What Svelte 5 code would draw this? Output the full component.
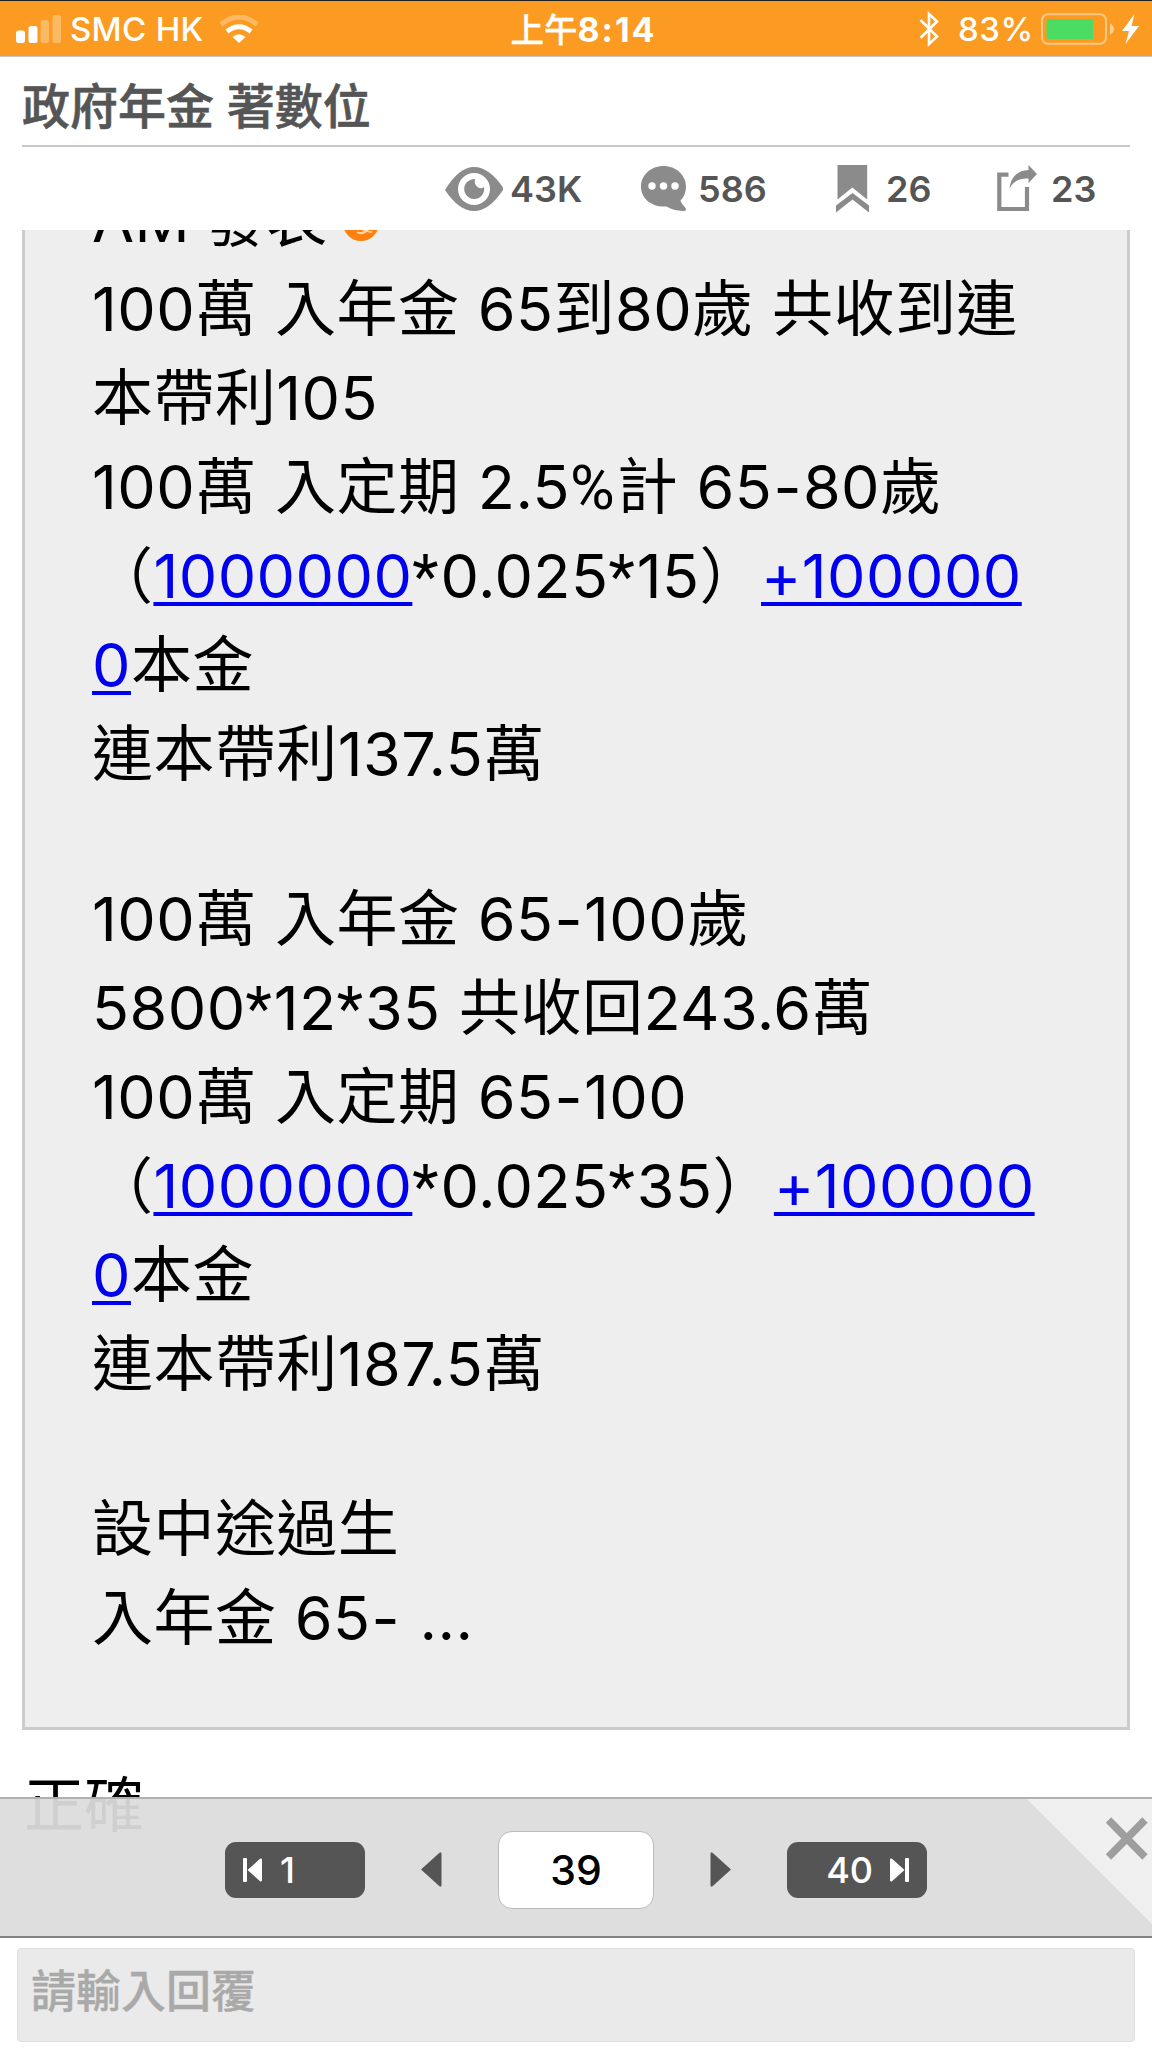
<script>
    const firstPage = 1;
    const lastPage = 40;
    let page = 39;
    let reply = "";
    let showPager = true;

    // each line is a list of parts, link parts are drawn as phone number links
    const lines = [
        [{ text: "100萬 入年金 65到80歲 共收到連" }],
        [{ text: "本帶利105" }],
        [{ text: "100萬 入定期 2.5%計 65-80歲" }],
        [{ text: "（" }, { text: "1000000", link: true }, { text: "*0.025*15）" }, { text: "+100000", link: true }],
        [{ text: "0", link: true }, { text: "本金" }],
        [{ text: "連本帶利137.5萬" }],
        [],
        [{ text: "100萬 入年金 65-100歲" }],
        [{ text: "5800*12*35 共收回243.6萬" }],
        [{ text: "100萬 入定期 65-100" }],
        [{ text: "（" }, { text: "1000000", link: true }, { text: "*0.025*35）" }, { text: "+100000", link: true }],
        [{ text: "0", link: true }, { text: "本金" }],
        [{ text: "連本帶利187.5萬" }],
        [],
        [{ text: "設中途過生" }],
        [{ text: "入年金 65- ..." }]
    ];

    // symbols get their own span, the narrower ones come from another font
    function pieces(text) {
        return text.split(/([*%-])/).filter((piece) => piece !== "");
    }

    function goTo(n) {
        page = Math.min(lastPage, Math.max(firstPage, n));
    }
</script>

<div class="screen">
    <div class="status-bar">
        <div class="status-left">
            <svg width="46" height="28" viewBox="0 0 46 28" fill="#fff">
                <rect x="0" y="15.5" width="9" height="12.5" rx="2.5" />
                <rect x="12.5" y="11" width="9" height="17" rx="2.5" />
                <rect x="24.5" y="5" width="8.5" height="23" rx="2.5" opacity=".3" />
                <rect x="36.5" y="0" width="8.5" height="28" rx="2.5" opacity=".3" />
            </svg>
            <span class="carrier">SMC HK</span>
            <svg width="40" height="28" viewBox="0 0 40 28" fill="none">
                <path d="M2 9.5Q20-5.5 38 9.5" stroke="#fff" stroke-width="5" opacity=".3" />
                <path d="M8 16.500Q20 7 32 16.500" stroke="#fff" stroke-width="5" />
                <path d="M13.500 22Q20 16.500 26.500 22L20 28Z" fill="#fff" />
            </svg>
        </div>
        <div class="clock">上午<b>8:14</b></div>
        <div class="status-right">
            <svg width="20" height="36" viewBox="0 0 20 36" fill="none" stroke="#fff" stroke-width="2.600">
                <path d="M1.500 9L18 25.500 10 33V3L18 10.500 1.500 27" />
            </svg>
            <span class="percent">83%</span>
            <svg width="74" height="32" viewBox="0 0 74 32">
                <rect x="1" y="1.200" width="64" height="29.600" rx="6" fill="none" stroke="#fff" stroke-width="2" opacity=".45" />
                <path d="M8 6H52V26H8Q5.500 26 5.500 23V9Q5.500 6 8 6Z" fill="#4cdc64" />
                <path d="M69 10.500Q73 12.500 73 16T69 21.500Z" fill="#fff" opacity=".5" />
            </svg>
            <svg class="bolt" width="17" height="30" viewBox="0 0 17 30" fill="#fff">
                <path d="M12.500 0L0 17H7L3.500 30 17 12H9.500Z" />
            </svg>
        </div>
    </div>

    <header>
        <h1>政府年金 著數位</h1>
        <div class="stats">
            <svg width="58" height="44" viewBox="0 0 58 44">
                <path d="M0 23Q14 0 29 0T58 20.500V23Q44 44 29 44T0 23Z" fill="#8b8b8b" />
                <circle cx="29" cy="22" r="16" fill="#fff" />
                <path d="M30 12A10 10 0 1 0 39 20Q36 22.500 32.500 20T30 12Z" fill="#8b8b8b" />
            </svg>
            <span class="views">43K</span>
            <svg width="46" height="46" viewBox="0 0 46 46">
                <path d="M22.500 0C35 0 45 9 45 20.500 45 26.500 43 31 39.500 34.500 40 38 45 41 45 43.500Q44.500 45.500 42 45 32 44.500 25.500 40.500C10 41.500 0 32 0 20.500S10 0 22.500 0Z" fill="#8b8b8b" />
                <g fill="#fff">
                    <circle cx="11" cy="20" r="3.700" />
                    <circle cx="22.500" cy="20" r="3.700" />
                    <circle cx="34" cy="20" r="3.700" />
                </g>
            </svg>
            <span class="comments">586</span>
            <svg width="33" height="48" viewBox="0 0 33 48" fill="#8b8b8b">
                <path d="M1.500 0H31.200V34.500L16.300 22.500 1.500 34.500Z" />
                <path d="M0 40.500L16.500 28 33 40.500V47.500L16.500 34.500 0 47.500Z" />
            </svg>
            <span class="saves">26</span>
            <svg width="40" height="47" viewBox="0 0 40 47">
                <path d="M11.500 9.700H2.300V44H30V22" fill="none" stroke="#8b8b8b" stroke-width="4.200" />
                <path d="M12.500 23.500C14 12 20 5.500 31.500 5V0L40 9 31.500 18V13.500C22 13 17 16 12.500 23.500Z" fill="#8b8b8b" />
            </svg>
            <span class="shares">23</span>
        </div>
    </header>

    <main>
        <blockquote>
            <div class="line author">
                AM 發表
                <svg class="emoji" width="36" height="40" viewBox="0 0 36 40">
                    <circle cx="18" cy="21" r="18" fill="#ff7f0f" />
                    <path d="M14 30Q21 34 28 24M20 28L29 30" fill="none" stroke="#ffd9a8" stroke-width="2" />
                </svg>
            </div>
            {#each lines as line}
                <div class="line" class:blank={line.length === 0}>
                    {#each line as part}{#if part.link}<a href="#{part.text}">{part.text}</a>{:else}{#each pieces(part.text) as piece}<span class:symbol={piece === "*" || piece === "%"} class:dash={piece === "-"}>{piece}</span>{/each}{/if}{/each}
                </div>
            {/each}
        </blockquote>
        <p class="answer">正確</p>

        {#if showPager}
            <nav>
                <button class="jump first" on:click={() => goTo(firstPage)}>
                    <svg width="20" height="24" viewBox="0 0 20 24" fill="#fff">
                        <rect x="0" y="0" width="4" height="24" rx="1" />
                        <path d="M4.500 12L17 .8Q19 0 19 2V22Q19 24 17 23.200Z" />
                    </svg>
                    {firstPage}
                </button>
                <button class="step" aria-label="previous" on:click={() => goTo(page - 1)}>
                    <svg width="21" height="35" viewBox="0 0 21 35" fill="#555"><path d="M0 17.500L18.500.8Q20.500-.5 20.500 2V33Q20.500 35.500 18.500 34.200Z" /></svg>
                </button>
                <div class="current">{page}</div>
                <button class="step" aria-label="next" on:click={() => goTo(page + 1)}>
                    <svg width="21" height="35" viewBox="0 0 21 35" fill="#555"><path d="M21 17.500L2.500.8Q.500-.5.500 2V33Q.500 35.500 2.500 34.200Z" /></svg>
                </button>
                <button class="jump last" on:click={() => goTo(lastPage)}>
                    {lastPage}
                    <svg width="20" height="24" viewBox="0 0 20 24" fill="#fff">
                        <path d="M14.500 12L2 .8Q0 0 0 2V22Q0 24 2 23.200Z" />
                        <rect x="15" y="0" width="4" height="24" rx="1" />
                    </svg>
                </button>
                <button class="close" aria-label="close" on:click={() => (showPager = false)}>
                    <svg width="125" height="125" viewBox="0 0 125 125">
                        <path d="M0 0H125V125Z" fill="#f0f0f0" />
                        <path d="M81.500 21L118 58M118 21L81.500 58" stroke="#9e9e9e" stroke-width="7.500" />
                    </svg>
                </button>
            </nav>
        {/if}
    </main>

    <footer>
        <input bind:value={reply} placeholder="請輸入回覆" />
    </footer>
</div>

<style>
    :global(body) {
        background: #fff;
    }

    .screen {
        width: 1152px;
        height: 2048px;
        overflow: hidden;
        display: flex;
        flex-direction: column;
        background: #fff;
        font-family: Inter, 'Noto Sans CJK TC', sans-serif;
    }

    svg {
        display: block;
        flex: none;
    }

    .status-bar {
        box-sizing: border-box;
        height: 57px;
        flex: none;
        display: grid;
        grid-template-columns: 1fr auto 1fr;
        align-items: center;
        padding: 0 13px 0 16px;
        border-top: 1px solid #222;
        border-bottom: 1px solid #c5c5c5;
        background: #fb9b21;
        color: #fff;
        font-size: 33px;
        font-weight: 500;
    }

    .status-left,
    .status-right {
        display: flex;
        align-items: center;
    }

    .status-right {
        justify-content: flex-end;
    }

    .carrier {
        margin-left: 8px;
        width: 149px;
        letter-spacing: .3px;
    }

    .clock {
        margin-left: 12px;
        padding-bottom: 2px;
        font-size: 33.5px;
        -webkit-text-stroke: .3px #fff;
    }

    .clock b {
        font-size: 34px;
        font-weight: 700;
        letter-spacing: 2px;
        -webkit-text-stroke: 0;
    }

    .percent {
        margin: 0 7px 0 19px;
        letter-spacing: .6px;
    }

    .bolt {
        margin-left: 7px;
    }

    header {
        box-sizing: border-box;
        height: 173px;
        flex: none;
        padding: 0 22px;
    }

    h1 {
        box-sizing: border-box;
        height: 90px;
        margin: 0;
        padding-top: 14px;
        border-bottom: 2px solid #c8c8c8;
        color: #555;
        font-size: 48px;
        line-height: 72px;
        font-weight: 500;
        -webkit-text-stroke: .6px #555;
    }

    .stats {
        height: 83px;
        display: flex;
        align-items: center;
        justify-content: flex-end;
        color: #555;
        font-size: 36px;
        font-weight: 600;
    }

    .views {
        width: 131px;
        margin-left: 7px;
    }

    .comments {
        width: 138px;
        margin-left: 11px;
    }

    .saves {
        width: 111px;
        margin-left: 17px;
    }

    .shares {
        width: 79px;
        margin-left: 14px;
    }

    main {
        position: relative;
        height: 1708px;
        flex: none;
        overflow: hidden;
    }

    blockquote {
        box-sizing: border-box;
        height: 1600px;
        margin: -100px 22px 0;
        padding: 43px 0 0 67px;
        border: 3px solid #ccc;
        background: #eee;
    }

    .line {
        height: 89px;
        font-size: 61px;
        line-height: 89px;
        letter-spacing: .45px;
        word-spacing: .8px;
        white-space: nowrap;
    }

    .author {
        word-spacing: -3px;
    }

    .blank {
        height: 76px;
    }

    .symbol {
        margin-right: 1.5px;
        font-family: Roboto, sans-serif;
        line-height: 1;
    }

    .dash {
        margin: 0 1px;
    }

    .emoji {
        display: inline-block;
        margin-left: 1px;
    }

    a {
        color: #0000ee;
        text-decoration-thickness: 4px;
        text-underline-offset: 4px;
    }

    .answer {
        margin: 31px 0 0 24px;
        font-size: 60px;
        line-height: 89px;
    }

    nav {
        position: absolute;
        left: 0;
        right: 0;
        bottom: 0;
        box-sizing: border-box;
        height: 141px;
        display: flex;
        align-items: center;
        justify-content: center;
        padding-top: 4px;
        border-top: 2px solid #b0b0b0;
        border-bottom: 2px solid #828282;
        background: rgba(220, 220, 220, .94);
    }

    button {
        padding: 0;
        border: 0;
        background: none;
        font-family: inherit;
    }

    .jump {
        box-sizing: border-box;
        width: 140px;
        height: 56px;
        display: flex;
        align-items: center;
        gap: 17px;
        padding: 0 17px 0 18px;
        border-radius: 11px;
        background: #555;
        color: #fff;
        font-size: 36px;
        font-weight: 500;
    }

    .last {
        justify-content: flex-end;
    }

    .step {
        margin: 0 56px;
    }

    .current {
        box-sizing: border-box;
        width: 156px;
        height: 78px;
        border: 1px solid #bbb;
        border-radius: 14px;
        background: #fff;
        font-size: 41px;
        line-height: 76px;
        font-weight: 500;
        text-align: center;
    }

    /* folded corner over the pager */
    .close {
        position: absolute;
        top: 0;
        right: 0;
    }

    footer {
        flex: 1;
        padding: 10px 17px 6px;
        display: flex;
    }

    input {
        box-sizing: border-box;
        width: 100%;
        padding: 0 14px 8px 13px;
        border: 1px solid #dfdfdf;
        border-radius: 4px;
        background: #eaeaea;
        font-family: inherit;
        font-size: 45px;
        font-weight: 500;
    }

    input::placeholder {
        color: #a9a9a9;
        -webkit-text-stroke: .3px #a9a9a9;
    }
</style>
